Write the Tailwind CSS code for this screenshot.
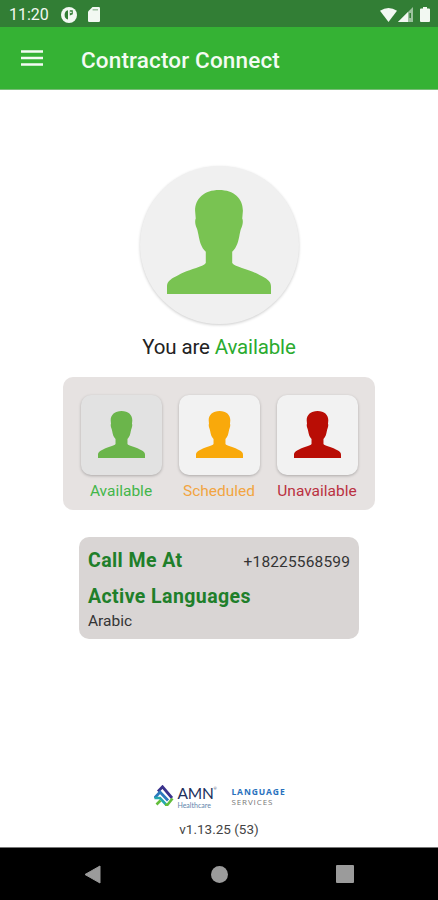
<!DOCTYPE html>
<html lang="en">
<head>
  <meta charset="UTF-8" />
  <meta name="viewport" content="width=device-width, initial-scale=1" />
  <title>Contractor Connect</title>
  <script src="https://cdn.jsdelivr.net/npm/@tailwindcss/browser@4"></script>
</head>
<body class="bg-white font-[Roboto,sans-serif] flex flex-col h-[900px] w-[438px] overflow-hidden whitespace-nowrap">

  <!-- Person silhouette shared by all the status icons -->
  <svg class="hidden">
    <symbol id="person" viewBox="0 0 311 311" preserveAspectRatio="none">
      <path d="M156 0C112 0 84 25 84 62L86 85C83 90 84 103 88 112C91 118 92 125 94 134C97 152 102 172 116 185V218C112 224 100 228 87 233C60 241 36 252 20 262C5 271 0 278 0 289V311H311V289C311 278 306 271 291 262C275 252 251 241 224 233C211 228 199 224 195 218V185C209 172 214 152 217 134C219 125 220 118 223 112C227 103 228 90 225 85L227 62C227 25 200 0 156 0Z" fill="currentColor" />
    </symbol>
  </svg>

  <!-- Status bar -->
  <div class="flex items-center h-[27px] shrink-0 bg-[#327e35] text-[#f2f8f2] pl-[9px] pr-[8px] pt-[2px]">
    <span class="text-[16px] leading-none w-[40px]">11:20</span>
    <svg class="w-[16px] h-[16px] ml-[12px]" viewBox="0 0 16 16">
      <circle cx="8" cy="8" r="8" fill="currentColor" />
      <path d="M7 3.200C4.800 3.600 3.600 5.500 3.600 8S4.800 12.200 7 12.600Z" fill="#327e35" />
      <path d="M8.800 3.200H11.800V7.200L8.800 8.600Z" fill="#327e35" />
      <circle cx="9.900" cy="5.300" r="0.900" fill="currentColor" />
    </svg>
    <svg class="w-[12px] h-[15px] ml-[11px]" viewBox="0 0 12 15">
      <path d="M4.500 0H10.800Q12 0 12 1.200V13.800Q12 15 10.800 15H1.200Q0 15 0 13.800V4.500Z" fill="currentColor" />
      <path d="M4.600 2.800H10" stroke="#8fb891" stroke-width="1.300" />
    </svg>
    <div class="flex items-center ml-auto">
      <svg class="w-[17px] h-[14px]" viewBox="0 0 17 14">
        <path d="M0 2.700Q8.500 -2.500 17 2.700L8.500 14Z" fill="currentColor" />
      </svg>
      <svg class="w-[15px] h-[15px] ml-[1px]" viewBox="0 0 15 15">
        <path d="M15 0V15H0Z" fill="#9bc29d" />
        <path d="M10 5V15H0Z" fill="currentColor" />
        <path d="M12.200 6V11" stroke="#327e35" stroke-width="1.600" />
      </svg>
      <svg class="w-[10px] h-[15px] ml-[7px]" viewBox="0 0 10 15">
        <path d="M3 0H7V1.500H9Q10 1.500 10 2.500V14Q10 15 9 15H1Q0 15 0 14V2.500Q0 1.500 1 1.500H3Z" fill="currentColor" />
      </svg>
    </div>
  </div>

  <!-- App bar -->
  <header class="flex items-center h-[63px] shrink-0 bg-[#35b234] border-b border-[#79bd78] text-[#f3fbf3] pl-[21px]">
    <svg class="w-[22px] h-[16px]" viewBox="0 0 22 16">
      <path d="M0 1.500H22M0 8H22M0 14.500H22" stroke="currentColor" stroke-width="2.400" />
    </svg>
    <h1 class="ml-[38px] mt-[4px] text-[22.5px] font-medium leading-none tracking-[0.15px]">Contractor Connect</h1>
  </header>

  <main class="flex flex-col items-center flex-1 pt-[76px]">

    <div class="flex justify-center w-[159px] h-[158px] rounded-full bg-[#f0f0f0] shadow-[0_1px_3px_rgba(0,0,0,0.2)] pt-[24px]">
      <svg class="w-[104px] h-[104px] text-[#79c352]"><use href="#person" /></svg>
    </div>

    <p class="mt-[11px] text-[20.5px] leading-[24px] tracking-[-0.15px] text-[#222]">You are <span class="text-[#2bab2f]">Available</span></p>

    <!-- Availability choices -->
    <div class="flex justify-center gap-[17px] w-[312px] h-[133px] mt-[18px] pt-[18px] rounded-[10px] bg-[#e6e2e1]">
      <div class="flex flex-col items-center w-[81px]">
        <div class="flex justify-center w-full h-[80px] pt-[16px] rounded-[10px] bg-[#e2e2e2] shadow-[0_1px_3px_rgba(0,0,0,0.25)]">
          <svg class="w-[47px] h-[47px] text-[#6bb54b]"><use href="#person" /></svg>
        </div>
        <span class="mt-[7px] text-[15.5px] leading-[18px] text-[#43b649]">Available</span>
      </div>
      <div class="flex flex-col items-center w-[81px]">
        <div class="flex justify-center w-full h-[80px] pt-[16px] rounded-[10px] bg-[#f2f2f2] shadow-[0_1px_3px_rgba(0,0,0,0.25)]">
          <svg class="w-[47px] h-[47px] text-[#f9a90b]"><use href="#person" /></svg>
        </div>
        <span class="mt-[7px] text-[15.5px] leading-[18px] text-[#f2a541]">Scheduled</span>
      </div>
      <div class="flex flex-col items-center w-[81px]">
        <div class="flex justify-center w-full h-[80px] pt-[16px] rounded-[10px] bg-[#f2f2f2] shadow-[0_1px_3px_rgba(0,0,0,0.25)]">
          <svg class="w-[47px] h-[47px] text-[#b90d05]"><use href="#person" /></svg>
        </div>
        <span class="mt-[7px] text-[15.5px] leading-[18px] text-[#ba3040]">Unavailable</span>
      </div>
    </div>

    <!-- Contact details -->
    <div class="w-[280px] h-[102px] mt-[27px] px-[9px] pt-[12px] rounded-[10px] bg-[#d9d5d4]">
      <div class="flex items-center justify-between h-[24px]">
        <h2 class="text-[19.5px] font-bold tracking-[0.42px] text-[#207f2a]">Call Me At</h2>
        <span class="mt-[3px] text-[15.5px] tracking-[0.15px] text-[#343434]">+18225568599</span>
      </div>
      <h2 class="mt-[12px] text-[19.5px] leading-[24px] font-bold tracking-[0.42px] text-[#207f2a]">Active Languages</h2>
      <p class="mt-[2px] text-[15.5px] leading-[20px] text-[#343434]">Arabic</p>
    </div>

    <!-- Logo and version -->
    <div class="flex items-start mt-auto">
      <svg class="w-[20px] h-[22px] mt-[3px] ml-[2px]" viewBox="0 0 20 22">
        <path d="M4 6.500L8.500 1.800L18 13" fill="none" stroke="#3a328c" stroke-width="2.800" />
        <path d="M0.500 13L6 7L14 15.500" fill="none" stroke="#2b78bd" stroke-width="2.800" />
        <path d="M0.500 13H6L12 19.500" fill="none" stroke="#24a8ad" stroke-width="2.600" />
        <path d="M2.500 19.500L6.500 15.500M11 19.800H13.500L18.500 13.500" fill="none" stroke="#63bd3b" stroke-width="2.600" />
      </svg>
      <div class="w-[37px] ml-[3px] pt-[4px] font-[Lato,sans-serif]">
        <div class="flex items-start text-[15.5px] leading-[15px] tracking-[-0.2px] text-[#20305c]">AMN<span class="text-[4px] leading-[5px]">®</span></div>
        <div class="pt-px text-[7px] leading-[6px] text-[#6184ab]">Healthcare</div>
      </div>
      <div class="ml-[17px] pt-[4px] font-['Open_Sans',sans-serif]">
        <div class="text-[8.5px] leading-[11px] font-bold tracking-[0.9px] text-[#2871bd]">LANGUAGE</div>
        <div class="text-[8px] leading-[10px] tracking-[0.9px] text-[#777]">SERVICES</div>
      </div>
    </div>
    <p class="mt-[12px] mb-[9px] text-[13.5px] leading-[18px] text-[#444]">v1.13.25 (53)</p>
  </main>

  <!-- Android navigation -->
  <nav class="flex items-center h-[53px] shrink-0 bg-black border-t border-[#777] text-[#9b9b9b] pl-[84px]">
    <svg class="w-[17px] h-[19px]" viewBox="0 0 17 19">
      <path d="M1 9.500L16 1V18Z" fill="currentColor" stroke="currentColor" stroke-linejoin="round" />
    </svg>
    <div class="w-[17px] h-[17px] ml-[110px] rounded-full bg-current"></div>
    <div class="w-[18px] h-[18px] ml-[108px] rounded-[1px] bg-current"></div>
  </nav>

</body>
</html>
